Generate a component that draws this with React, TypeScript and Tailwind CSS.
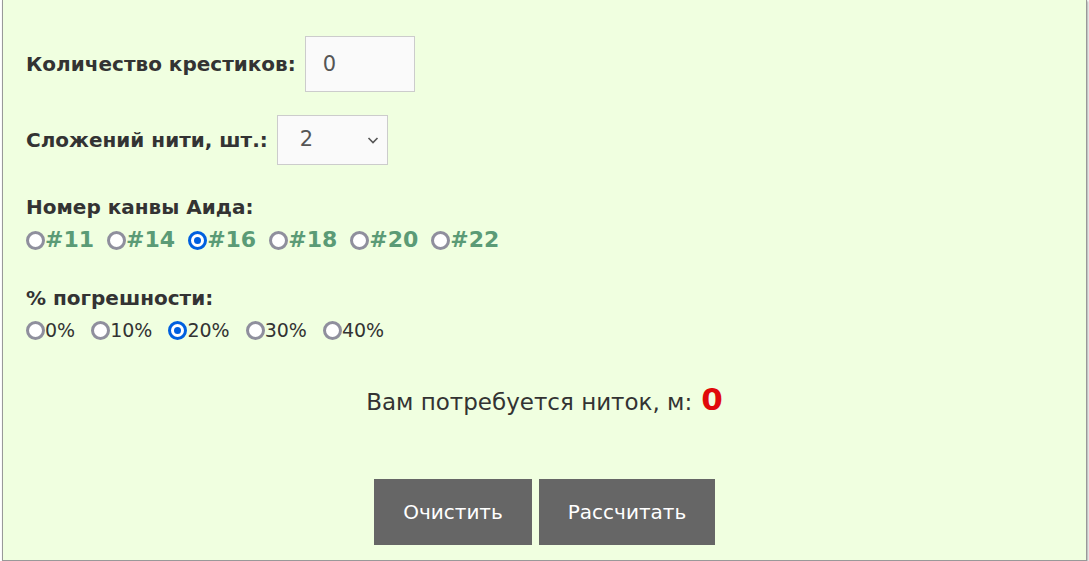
import React, { useState } from 'react';

// Калькулятор расхода ниток для вышивки крестиком
const canvasSizes = ['11', '14', '16', '18', '20', '22'];
const errorRates = ['0', '10', '20', '30', '40'];

function Radio({ checked, onChange }: { checked: boolean; onChange: () => void }) {
  return (
    <span
      onClick={onChange}
      className={
        checked
          ? 'inline-flex h-[19px] w-[19px] shrink-0 items-center justify-center rounded-full border-[3px] border-[#0060df] bg-white'
          : 'inline-flex h-[19px] w-[19px] shrink-0 items-center justify-center rounded-full border-[3px] border-[#8f8f9d] bg-white'
      }
    >
      {checked && <span className="h-[7px] w-[7px] rounded-full bg-[#0060df]" />}
    </span>
  );
}

export default function App() {
  const [count, setCount] = useState('0');
  const [folds, setFolds] = useState('2');
  const [canvas, setCanvas] = useState('16');
  const [rate, setRate] = useState('20');

  return (
    <div className="h-[561px] w-[1089px] bg-white" style={{ fontFamily: '"DejaVu Sans", Verdana, sans-serif' }}>
      <div className="ml-[2px] h-[561px] w-[1085px] border-x border-b border-[#999] bg-[#f0ffe0] pl-[23px] text-[#333] shadow-[1px_1px_2px_rgba(0,0,0,0.35)]">
        <div className="flex items-center gap-[9px] pt-[36px]">
          <span className="text-[20px] font-bold">Количество крестиков:</span>
          <input
            value={count}
            onChange={(e) => setCount(e.target.value)}
            className="h-[56px] w-[110px] border border-[#ccc] bg-[#fafafa] pl-[17px] text-[21px] text-[#555] outline-none"
          />
        </div>

        <div className="mt-[23px] flex items-center gap-[9px]">
          <span className="text-[20px] font-bold">Сложений нити, шт.:</span>
          <div className="relative">
            <select
              value={folds}
              onChange={(e) => setFolds(e.target.value)}
              className="h-[50px] w-[111px] appearance-none border border-[#ccc] bg-[#fafafa] pl-[22px] text-[21px] text-[#555] outline-none"
            >
              {[1, 2, 3, 4, 5, 6].map((n) => (
                <option key={n} value={n}>
                  {n}
                </option>
              ))}
            </select>
            <svg className="pointer-events-none absolute right-[8px] top-[20px]" width="14" height="10" viewBox="0 0 14 10">
              <path d="M2.5 3l4.5 4.5 4.5-4.5" fill="none" stroke="#555" strokeWidth="1.6" />
            </svg>
          </div>
        </div>

        <div className="mt-[28px] text-[20px] font-bold leading-[28px]">Номер канвы Аида:</div>
        <div className="mt-[4px] flex items-center text-[22px] font-bold leading-[30px] text-[#5b9b76]">
          {canvasSizes.map((s) => (
            <label key={s} className="mr-[13px] flex items-center">
              <Radio checked={canvas === s} onChange={() => setCanvas(s)} />
              <span>#{s}</span>
            </label>
          ))}
        </div>

        <div className="mt-[29px] text-[20px] font-bold leading-[28px]">% погрешности:</div>
        <div className="mt-[4px] flex items-center text-[19px] leading-[28px]">
          {errorRates.map((r) => (
            <label key={r} className="mr-[16px] flex items-center">
              <Radio checked={rate === r} onChange={() => setRate(r)} />
              <span>{r}%</span>
            </label>
          ))}
        </div>

        <div className="mt-[32px] -ml-[23px] flex h-[36px] items-baseline justify-center gap-[9px] text-[23px]">
          <span>Вам потребуется ниток, м:</span>
          <span className="text-[31px] font-bold text-[#e00a0a]">0</span>
        </div>

        <div className="mt-[67px] -ml-[23px] flex justify-center gap-[7px]">
          <button className="h-[66px] w-[158px] bg-[#666] text-[20px] text-white">Очистить</button>
          <button className="h-[66px] w-[176px] bg-[#666] text-[20px] text-white">Рассчитать</button>
        </div>
      </div>
    </div>
  );
}
